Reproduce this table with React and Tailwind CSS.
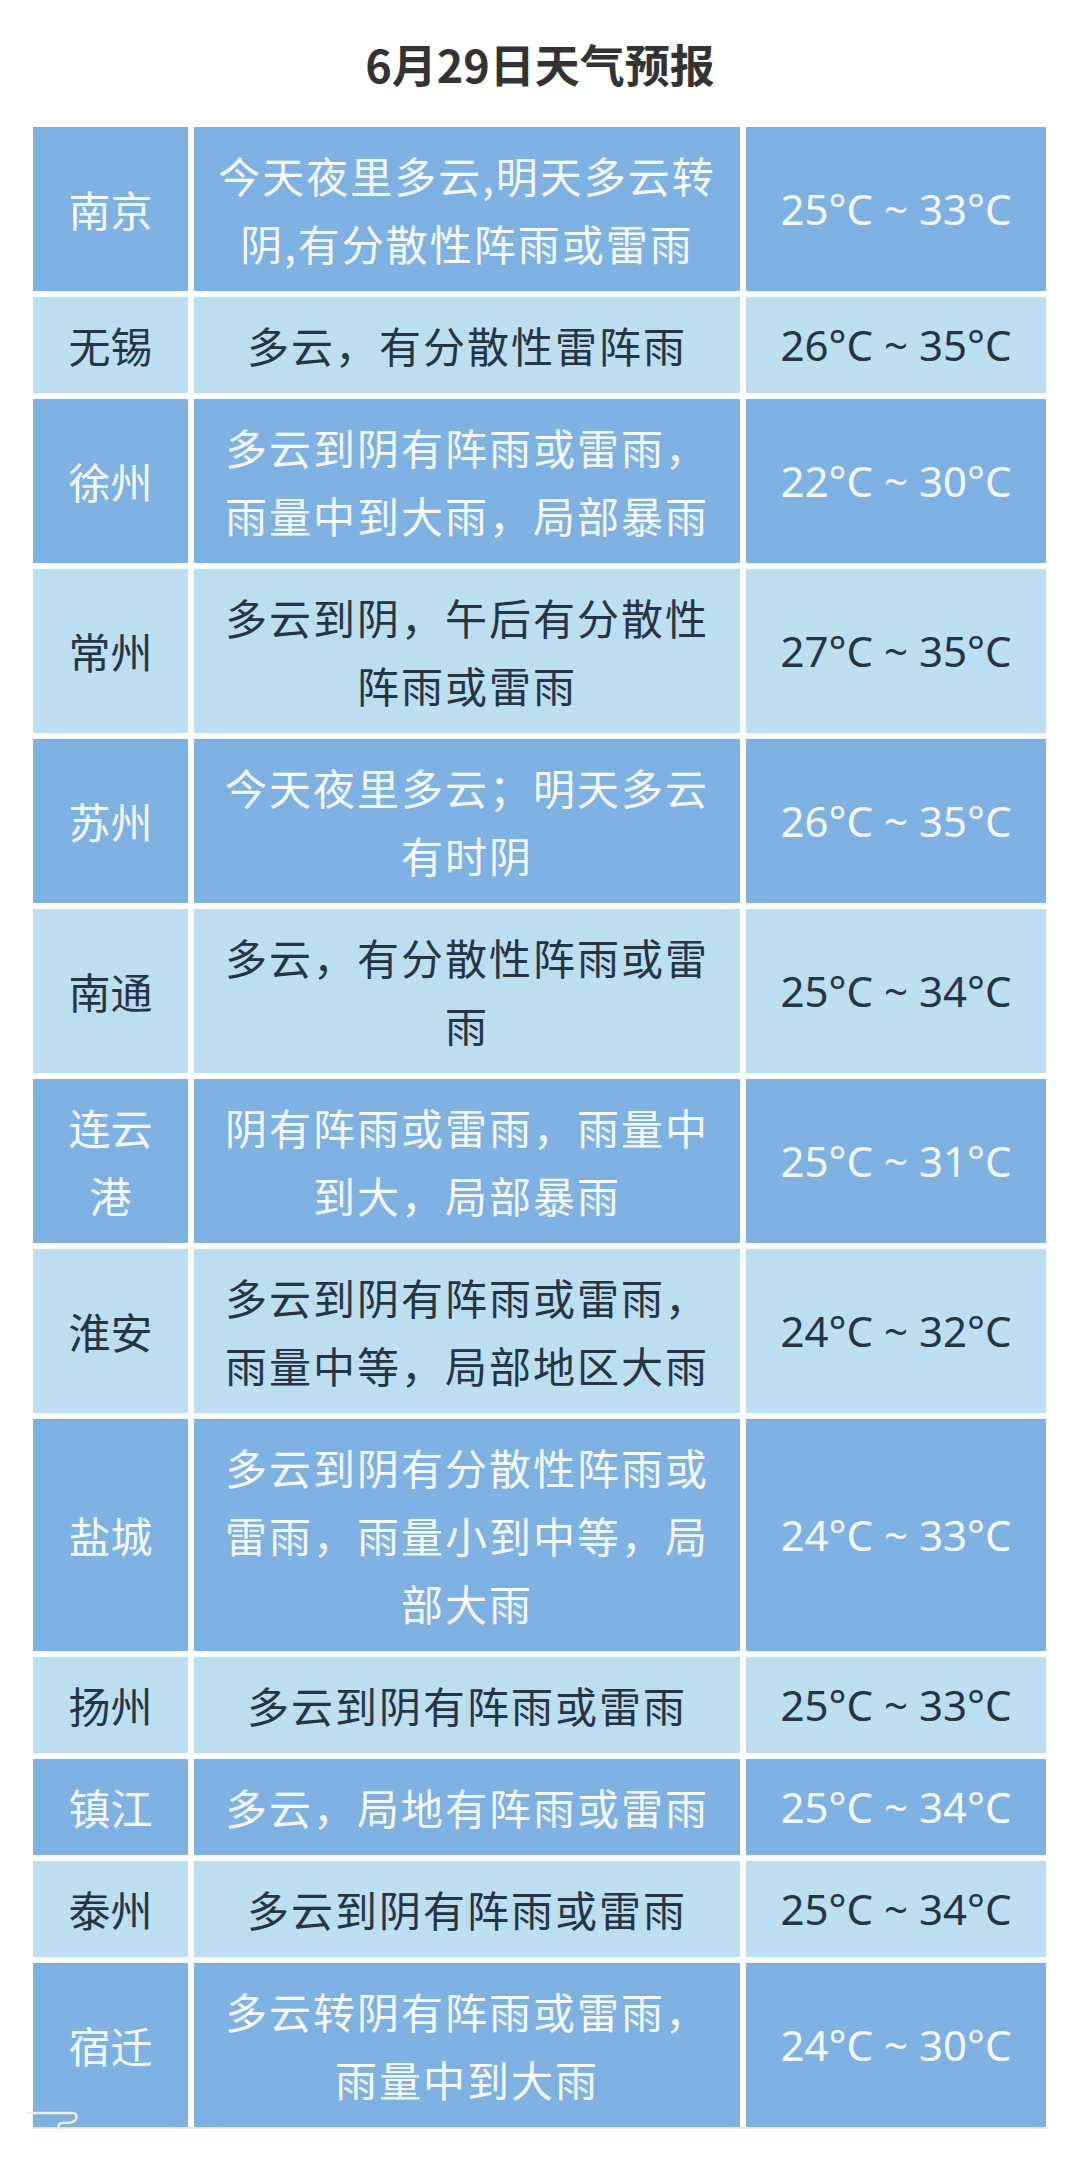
import React from 'react';

const rows = [
    { city: ['南京'], desc: ['今天夜里多云,明天多云转', '阴,有分散性阵雨或雷雨'], temp: '25°C ~ 33°C' },
    { city: ['无锡'], desc: ['多云，有分散性雷阵雨'], temp: '26°C ~ 35°C' },
    { city: ['徐州'], desc: ['多云到阴有阵雨或雷雨，', '雨量中到大雨，局部暴雨'], temp: '22°C ~ 30°C' },
    { city: ['常州'], desc: ['多云到阴，午后有分散性', '阵雨或雷雨'], temp: '27°C ~ 35°C' },
    { city: ['苏州'], desc: ['今天夜里多云；明天多云', '有时阴'], temp: '26°C ~ 35°C' },
    { city: ['南通'], desc: ['多云，有分散性阵雨或雷', '雨'], temp: '25°C ~ 34°C' },
    { city: ['连云', '港'], desc: ['阴有阵雨或雷雨，雨量中', '到大，局部暴雨'], temp: '25°C ~ 31°C' },
    { city: ['淮安'], desc: ['多云到阴有阵雨或雷雨，', '雨量中等，局部地区大雨'], temp: '24°C ~ 32°C' },
    { city: ['盐城'], desc: ['多云到阴有分散性阵雨或', '雷雨，雨量小到中等，局', '部大雨'], temp: '24°C ~ 33°C' },
    { city: ['扬州'], desc: ['多云到阴有阵雨或雷雨'], temp: '25°C ~ 33°C' },
    { city: ['镇江'], desc: ['多云，局地有阵雨或雷雨'], temp: '25°C ~ 34°C' },
    { city: ['泰州'], desc: ['多云到阴有阵雨或雷雨'], temp: '25°C ~ 34°C' },
    { city: ['宿迁'], desc: ['多云转阴有阵雨或雷雨，', '雨量中到大雨'], temp: '24°C ~ 30°C' },
];

const cjk = { fontFamily: '"Noto Sans CJK SC", "Noto Sans", sans-serif' };
const latin = { fontFamily: '"Noto Sans", "Open Sans", sans-serif' };

export default function App() {
    return (
        <div className="w-[1080px] min-h-[2184px] bg-white relative">
            <div className="h-[127px] flex items-center justify-center">
                <h1 className="text-[45px] font-bold text-[#333333] leading-none" style={cjk}>
                    6月29日天气预报
                </h1>
            </div>

            <div className="pl-[33px]">
                <div className="grid grid-cols-[155px_546px_300px] gap-[6px]">
                    {rows.map((r, i) => {
                        const dark = i % 2 === 0;
                        const cell = dark
                            ? 'bg-[#7eb2e2] text-[#f4faff]'
                            : 'bg-[#bbdef1] text-[#263545]';
                        return (
                            <React.Fragment key={i}>
                                <div className={`${cell} flex flex-col items-center justify-center py-[14px] text-[42px] leading-[68px]`} style={cjk}>
                                    {r.city.map((c, j) => <div key={j}>{c}</div>)}
                                </div>
                                <div className={`${cell} flex flex-col items-center justify-center py-[14px] text-[42px] leading-[68px] tracking-[2px]`} style={cjk}>
                                    {r.desc.map((d, j) => <div key={j}>{d}</div>)}
                                </div>
                                <div className={`${cell} flex items-center justify-center py-[14px] text-[42px] leading-[68px]`} style={latin}>
                                    {r.temp}
                                </div>
                            </React.Fragment>
                        );
                    })}
                </div>
                <div className="w-[1015px] h-[2px] bg-[#ebe6d8]"></div>
            </div>

            {/* little paper curl at the bottom left */}
            <svg className="absolute left-[26px] top-[2108px]" width="54" height="22" viewBox="0 0 54 22">
                <path d="M1 5 H46 Q52 5 50 11 Q48 15 40 15 H36 Q31 16 33 21" fill="none" stroke="#f3ecdc" strokeWidth="2.5" strokeLinecap="round" />
            </svg>
        </div>
    );
}
